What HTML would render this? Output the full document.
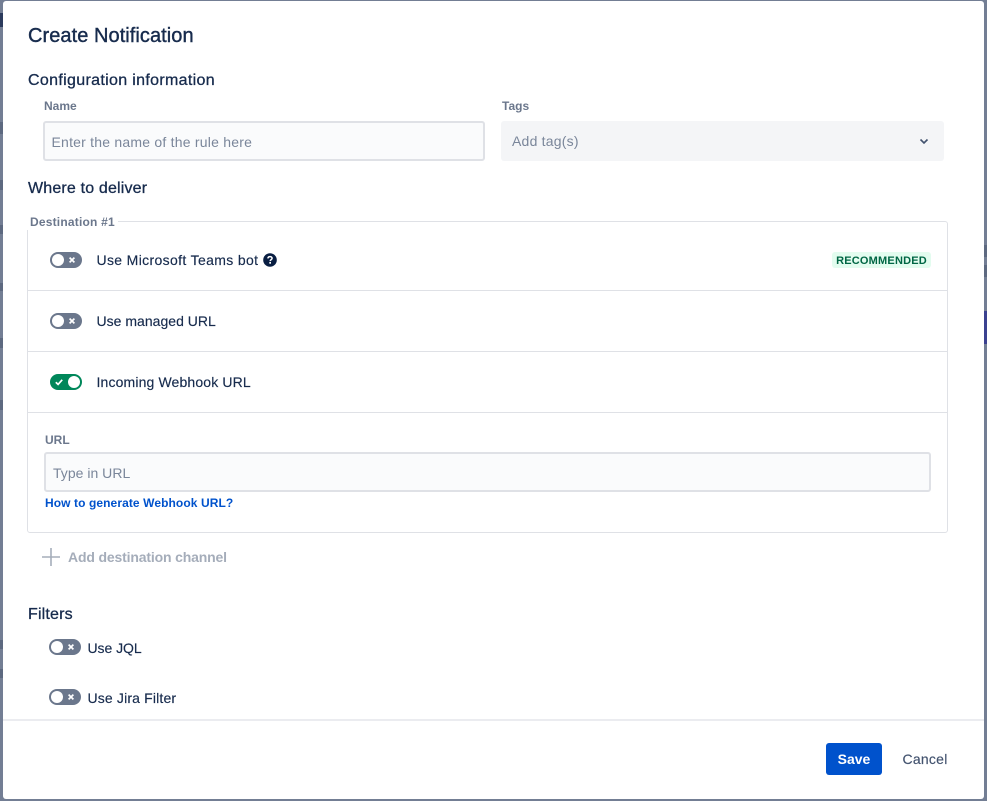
<!DOCTYPE html>
<html>
<head>
<meta charset="utf-8">
<style>
html,body{margin:0;padding:0;width:987px;height:801px;overflow:hidden;background:#737e94;font-family:"Liberation Sans",sans-serif;color:#172b4d}
.a{position:absolute;white-space:nowrap}
#m{position:absolute;left:3px;top:1px;width:981px;height:798px;background:#fff;border-radius:3px}
.h{font-size:16px;line-height:20px;color:#172b4d;letter-spacing:.17px;-webkit-text-stroke:.3px #172b4d}
.l{font-size:12px;line-height:16px;font-weight:bold;color:#6b778c}
.t{font-size:14px;line-height:20px;color:#172b4d;-webkit-text-stroke:.15px #172b4d}
.i{box-sizing:border-box;background:#fafbfc;border:2px solid #dfe1e6;border-radius:3px}
.p{font-size:14px;line-height:20px;color:#7a869a;letter-spacing:.22px}
.tg{position:absolute;width:32px;height:16px;border-radius:8px;background:#6b778c}
.tg i{position:absolute;left:2px;top:2px;width:12px;height:12px;border-radius:50%;background:#fff}
.tg svg{position:absolute;left:19px;top:5px}
.tg.on{background:#00875a}
.tg.on i{left:18px}
.tg.on svg{left:5px;top:4px}
.ln{position:absolute;background:#dfe1e6;height:1px}
.b{background:#5d6980;width:3px}
</style>
</head>
<body>
<div class="a" style="left:0;top:13px;width:3px;height:14px;background:#2b3a5c"></div>
<div class="a b" style="left:0;top:122px;height:12px"></div>
<div class="a b" style="left:0;top:180px;height:10px"></div>
<div class="a b" style="left:0;top:225px;height:9px"></div>
<div class="a b" style="left:0;top:283px;height:8px"></div>
<div class="a b" style="left:0;top:338px;height:10px"></div>
<div class="a b" style="left:0;top:400px;height:10px"></div>
<div class="a b" style="left:0;top:640px;height:9px"></div>
<div class="a b" style="left:0;top:669px;height:9px"></div>
<div class="a" style="left:984px;top:311px;width:3px;height:33px;background:#3b4190"></div>
<div class="a b" style="left:984px;top:245px;height:12px"></div>
<div class="a b" style="left:984px;top:265px;height:12px"></div>

<div id="m"></div>

<div class="a" style="left:28px;top:24px;font-size:20px;line-height:24px;color:#172b4d;letter-spacing:.06px;-webkit-text-stroke:.4px #172b4d">Create Notification</div>
<div class="a h" style="left:28px;top:71px;letter-spacing:.33px">Configuration information</div>

<div class="a l" style="left:44px;top:98px">Name</div>
<div class="a i" style="left:43px;top:121px;width:442px;height:40px"></div>
<div class="a p" style="left:51.5px;top:132px">Enter the name of the rule here</div>

<div class="a l" style="left:502px;top:98px">Tags</div>
<div class="a" style="left:501px;top:121px;width:443px;height:40px;background:#f4f5f7;border-radius:3px"></div>
<div class="a p" style="left:512px;top:131px">Add tag(s)</div>
<svg class="a" style="left:918px;top:135px" width="12" height="12" viewBox="0 0 12 12"><path d="M2.5 4.5 6 8 9.5 4.5" fill="none" stroke="#42526e" stroke-width="1.6"/></svg>

<div class="a h" style="left:28px;top:179px">Where to deliver</div>

<div class="a" style="box-sizing:border-box;left:27px;top:221px;width:921px;height:312px;border:1px solid #dfe1e6;border-radius:3px"></div>
<div class="a l" style="left:27px;top:214px;background:#fff;padding:0 3px 0 3px;letter-spacing:.2px">Destination #1</div>

<div class="tg" style="left:50px;top:252px"><i></i><svg width="6" height="6" viewBox="0 0 6 6"><path d="M.6.6 5.4 5.4M5.4.6.6 5.4" stroke="#fff" stroke-width="1.7"/></svg></div>
<div class="a t" style="left:96.5px;top:250px;letter-spacing:.35px">Use Microsoft Teams bot</div>
<svg class="a" style="left:263px;top:253px" width="14" height="14" viewBox="0 0 14 14"><circle cx="7" cy="7" r="6.8" fill="#091e42"/><path d="M4.9 5.4C5 4.2 5.9 3.6 7 3.6 8.2 3.6 9.1 4.3 9.1 5.3 9.1 6.6 7.2 6.7 7.2 8.1" fill="none" stroke="#fff" stroke-width="1.5"/><rect x="6.3" y="9" width="1.7" height="1.7" fill="#fff"/></svg>
<div class="a" style="left:832px;top:252px;width:99px;height:16px;background:#e3fcef;border-radius:3px;color:#006644;font-size:11px;font-weight:bold;line-height:18px;text-align:center;letter-spacing:.2px">RECOMMENDED</div>
<div class="ln" style="left:28px;top:290px;width:919px"></div>

<div class="tg" style="left:50px;top:313px"><i></i><svg width="6" height="6" viewBox="0 0 6 6"><path d="M.6.6 5.4 5.4M5.4.6.6 5.4" stroke="#fff" stroke-width="1.7"/></svg></div>
<div class="a t" style="left:96.5px;top:311px;letter-spacing:.02px">Use managed URL</div>
<div class="ln" style="left:28px;top:351px;width:919px"></div>

<div class="tg on" style="left:50px;top:374px"><svg width="8" height="8" viewBox="0 0 8 8"><path d="M.8 4.2 3.1 6.4 7.2 1.8" fill="none" stroke="#fff" stroke-width="1.7"/></svg><i></i></div>
<div class="a t" style="left:96.5px;top:372px;letter-spacing:.14px">Incoming Webhook URL</div>
<div class="ln" style="left:28px;top:412px;width:919px"></div>

<div class="a l" style="left:45px;top:432px">URL</div>
<div class="a i" style="left:44px;top:452px;width:887px;height:40px"></div>
<div class="a p" style="left:53px;top:463px;letter-spacing:.02px">Type in URL</div>
<div class="a" style="left:45px;top:495px;font-size:12px;line-height:16px;font-weight:bold;color:#0052cc;letter-spacing:.09px">How to generate Webhook URL?</div>

<svg class="a" style="left:42px;top:548px" width="18" height="18" viewBox="0 0 18 18"><path d="M9 0V18M0 9H18" stroke="#a5adba" stroke-width="1.6"/></svg>
<div class="a" style="left:68px;top:547px;font-size:14px;line-height:20px;font-weight:bold;color:#a5adba;letter-spacing:-.16px">Add destination channel</div>

<div class="a h" style="left:28px;top:605px">Filters</div>

<div class="tg" style="left:49px;top:639px"><i></i><svg width="6" height="6" viewBox="0 0 6 6"><path d="M.6.6 5.4 5.4M5.4.6.6 5.4" stroke="#fff" stroke-width="1.7"/></svg></div>
<div class="a t" style="left:87.5px;top:638px;letter-spacing:-.05px">Use JQL</div>
<div class="tg" style="left:49px;top:689px"><i></i><svg width="6" height="6" viewBox="0 0 6 6"><path d="M.6.6 5.4 5.4M5.4.6.6 5.4" stroke="#fff" stroke-width="1.7"/></svg></div>
<div class="a t" style="left:87.5px;top:688px;letter-spacing:.16px">Use Jira Filter</div>

<div class="a" style="left:3px;top:719px;width:981px;height:2px;background:#ebecf0"></div>

<div class="a" style="left:826px;top:743px;width:56px;height:32px;background:#0052cc;border-radius:3px;color:#fff;font-size:14px;font-weight:bold;line-height:32px;text-align:center">Save</div>
<div class="a" style="left:902.5px;top:749px;font-size:14px;line-height:20px;color:#42526e;letter-spacing:.25px;-webkit-text-stroke:.15px #42526e">Cancel</div>
</body>
</html>
